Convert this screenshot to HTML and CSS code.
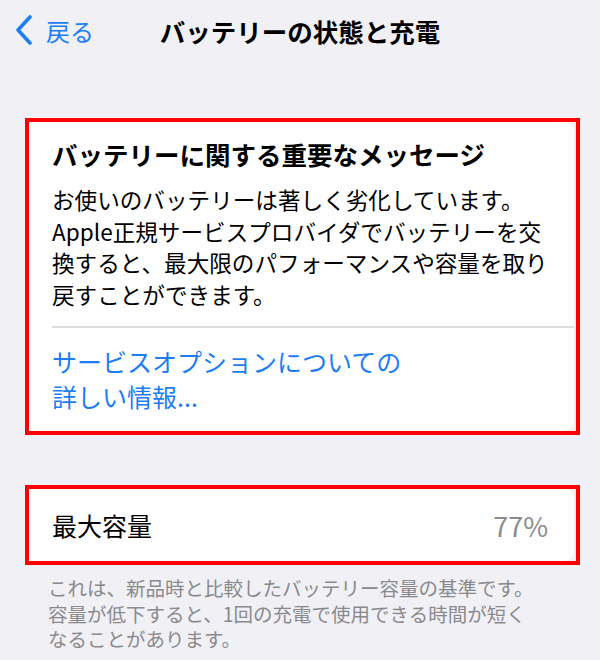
FILE: index.html
```html
<!DOCTYPE html>
<html lang="ja">
<head>
    <meta charset="UTF-8">
    <meta name="viewport" content="width=device-width, initial-scale=1.0">
    <title>バッテリーの状態と充電</title>
    <link rel="stylesheet" href="styles.css">
</head>
<body>
    <header class="nav">
        <a class="back" href="#">
            <svg class="chevron" width="18" height="30" viewBox="0 0 18 30">
                <path d="M15 2 L3 15 L15 28" fill="none" stroke="#1c7ef2" stroke-width="3.6" stroke-linecap="round" stroke-linejoin="round"/>
            </svg>
            <span>戻る</span>
        </a>
        <h1 class="nav-title">バッテリーの状態と充電</h1>
        <div></div>
    </header>

    <main class="content">
        <!-- 重要なメッセージ -->
        <div class="highlight msg-box">
            <section class="card">
                <div class="msg">
                    <h2 class="msg-title">バッテリーに関する重要なメッセージ</h2>
                    <p class="msg-text">お使いのバッテリーは著しく劣化しています。<br>Apple正規サービスプロバイダでバッテリーを交<br>換すると、最大限のパフォーマンスや容量を取り<br>戻すことができます。</p>
                </div>
                <a class="msg-link" href="#">サービスオプションについての<br>詳しい情報...</a>
            </section>
        </div>

        <!-- 最大容量 -->
        <div class="highlight cap-box">
            <section class="card cap-row">
                <span class="cap-label">最大容量</span>
                <span class="cap-value">77%</span>
            </section>
        </div>
        <p class="note">これは、新品時と比較したバッテリー容量の基準です。<br>容量が低下すると、1回の充電で使用できる時間が短く<br>なることがあります。</p>
    </main>
</body>
</html>
```

FILE: styles.css
```css
body {
    margin: 0;
    background-color: #f0f0f5;
    font-family: "Noto Sans CJK JP", "Noto Sans", sans-serif;
    color: #000;
}
.nav {
    display: grid;
    grid-template-columns: 1fr auto 1fr;
    align-items: center;
    height: 60px;
}
.back {
    display: flex;
    align-items: center;
    gap: 13px;
    padding-left: 15px;
    color: #1c7ef2;
    text-decoration: none;
    font-size: 24px;
}
.chevron {
    display: block;
}
.nav-title {
    margin: 0;
    font-size: 25.5px;
    font-weight: 700;
}
.content {
    padding: 58px 20px 0 25px;
}
.highlight {
    border: 4px solid #ff0000;
    padding-right: 2px;
}
.card {
    background-color: #fff;
    border-radius: 0 10px 10px 0;
}
.msg {
    margin-left: 23px;
    padding: 15px 20px 16px 0;
    border-bottom: 2px solid #dcdcdf;
}
.msg-title {
    margin: 0 0 13px;
    font-size: 25.5px;
    line-height: 34px;
    font-weight: 700;
}
.msg-text {
    margin: 0;
    font-size: 22.6px;
    line-height: 31.5px;
    white-space: nowrap;
}
.msg-link {
    display: block;
    padding: 16px 23px 17px;
    color: #1c7ef2;
    text-decoration: none;
    font-size: 25px;
    line-height: 35px;
}
.cap-box {
    margin-top: 50px;
}
.cap-row {
    display: flex;
    justify-content: space-between;
    align-items: center;
    height: 72px;
    padding: 0 26px 0 23px;
}
.cap-label {
    font-size: 25px;
}
.cap-value {
    font-size: 27px;
    color: #8a8a8e;
}
.note {
    margin: 10px 0 0 23px;
    font-size: 19.5px;
    line-height: 25.5px;
    color: #8a8a8e;
    white-space: nowrap;
}
```
